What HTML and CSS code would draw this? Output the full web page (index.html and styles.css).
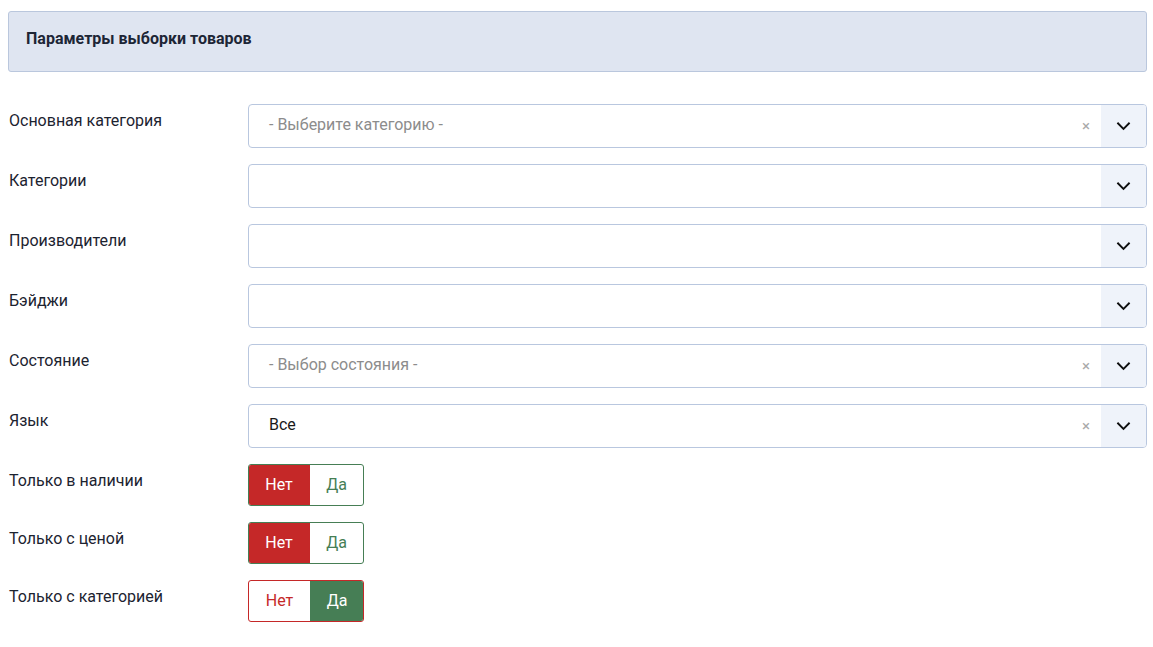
FILE: index.html
```html
<!DOCTYPE html>
<html lang="ru">
<head>
  <meta charset="UTF-8">
  <title>Параметры выборки товаров</title>
  <link rel="stylesheet" href="styles.css">
</head>
<body>
  <div class="panel-head">Параметры выборки товаров</div>

  <div class="form">
    <div class="row">
      <label>Основная категория</label>
      <div class="select">
        <span class="value placeholder">- Выберите категорию -</span>
        <span class="clear">&times;</span>
        <span class="arrow"><svg viewBox="0 0 16 10" width="15" height="10"><path d="M1.5 1.5 8 8l6.5-6.5" fill="none" stroke="#111" stroke-width="2"/></svg></span>
      </div>
    </div>

    <div class="row">
      <label>Категории</label>
      <div class="select">
        <span class="value"></span>
        <span class="arrow"><svg viewBox="0 0 16 10" width="15" height="10"><path d="M1.5 1.5 8 8l6.5-6.5" fill="none" stroke="#111" stroke-width="2"/></svg></span>
      </div>
    </div>

    <div class="row">
      <label>Производители</label>
      <div class="select">
        <span class="value"></span>
        <span class="arrow"><svg viewBox="0 0 16 10" width="15" height="10"><path d="M1.5 1.5 8 8l6.5-6.5" fill="none" stroke="#111" stroke-width="2"/></svg></span>
      </div>
    </div>

    <div class="row">
      <label>Бэйджи</label>
      <div class="select">
        <span class="value"></span>
        <span class="arrow"><svg viewBox="0 0 16 10" width="15" height="10"><path d="M1.5 1.5 8 8l6.5-6.5" fill="none" stroke="#111" stroke-width="2"/></svg></span>
      </div>
    </div>

    <div class="row">
      <label>Состояние</label>
      <div class="select">
        <span class="value placeholder">- Выбор состояния -</span>
        <span class="clear">&times;</span>
        <span class="arrow"><svg viewBox="0 0 16 10" width="15" height="10"><path d="M1.5 1.5 8 8l6.5-6.5" fill="none" stroke="#111" stroke-width="2"/></svg></span>
      </div>
    </div>

    <div class="row">
      <label>Язык</label>
      <div class="select">
        <span class="value">Все</span>
        <span class="clear">&times;</span>
        <span class="arrow"><svg viewBox="0 0 16 10" width="15" height="10"><path d="M1.5 1.5 8 8l6.5-6.5" fill="none" stroke="#111" stroke-width="2"/></svg></span>
      </div>
    </div>

    <div class="row">
      <label>Только в наличии</label>
      <div class="switch off">
        <span class="no">Нет</span>
        <span class="yes">Да</span>
      </div>
    </div>

    <div class="row">
      <label>Только с ценой</label>
      <div class="switch off">
        <span class="no">Нет</span>
        <span class="yes">Да</span>
      </div>
    </div>

    <div class="row">
      <label>Только с категорией</label>
      <div class="switch on">
        <span class="no">Нет</span>
        <span class="yes">Да</span>
      </div>
    </div>
  </div>
</body>
</html>
```

FILE: styles.css
```css
body {
  margin: 11px 6px 8px 8px;
  font-family: Roboto, 'Liberation Sans', sans-serif;
  font-size: 16px;
  color: #1c2330;
  background: #fff;
}

.panel-head {
  height: 61px;
  box-sizing: border-box;
  padding: 0 17px 7px;
  display: flex;
  align-items: center;
  background: #dfe5f1;
  border: 1px solid #bac7dd;
  border-radius: 3px;
  font-weight: bold;
  font-size: 16px;
  color: #1d2636;
}

.form {
  margin-top: 32px;
}

.row {
  display: flex;
  align-items: flex-start;
  margin-bottom: 16px;
}

.row label {
  width: 239px;
  padding-left: 1px;
  padding-top: 6px;
  line-height: 22px;
  flex-shrink: 0;
}

.select {
  flex: 1;
  height: 44px;
  box-sizing: border-box;
  display: flex;
  align-items: center;
  border: 1px solid #b9c7df;
  border-radius: 4px;
  overflow: hidden;
  background: #fff;
}

.select .value {
  flex: 1;
  padding-left: 20px;
  padding-bottom: 3px;
  font-size: 16px;
  color: #1a1a1a;
}

.select .placeholder {
  color: #8c8c8c;
}

.select .clear {
  color: #a9a9a9;
  font-size: 15px;
  margin-right: 11px;
}

.select .arrow {
  width: 45px;
  height: 100%;
  display: flex;
  align-items: center;
  justify-content: center;
  background: #eff3fa;
}

.switch {
  display: flex;
  height: 42px;
  width: 116px;
  box-sizing: border-box;
  border-radius: 3px;
  overflow: hidden;
  font-size: 16px;
}

.switch span {
  display: flex;
  align-items: center;
  justify-content: center;
  box-sizing: border-box;
  padding-bottom: 1px;
}

.switch .no {
  width: 61px;
}

.switch .yes {
  flex: 1;
}

.switch.off {
  border: 1px solid #467e55;
}

.switch.off .no {
  background: #c52828;
  color: #fff;
  margin: -1px 0 -1px -1px;
  width: 62px;
}

.switch.off .yes {
  color: #467e55;
}

.switch.on {
  border: 1px solid #c52828;
}

.switch.on .no {
  color: #c52828;
}

.switch.on .yes {
  background: #467e55;
  color: #fff;
  margin: -1px -1px -1px 0;
}
```
